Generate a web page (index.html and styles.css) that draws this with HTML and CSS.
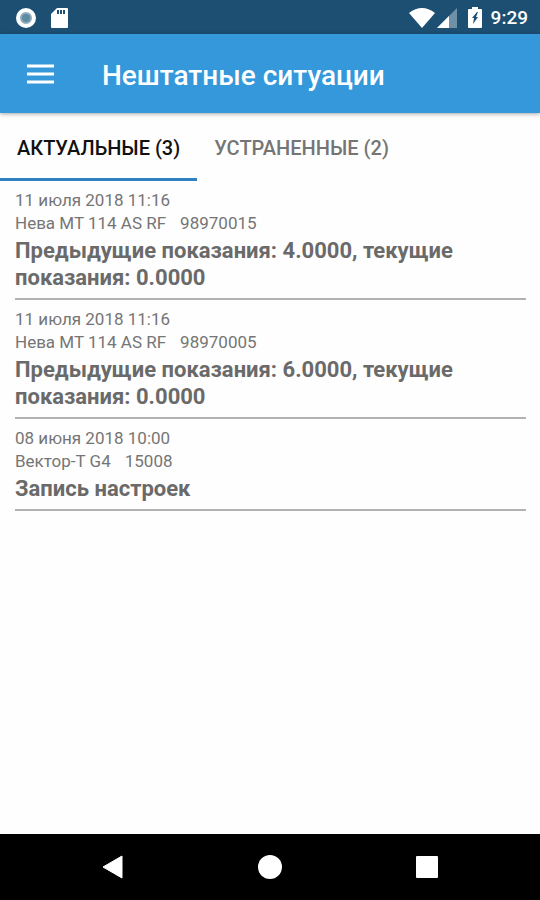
FILE: index.html
```html
<!DOCTYPE html>
<html lang="ru">
    <head>
        <meta charset="UTF-8">
        <meta name="viewport" content="width=device-width, initial-scale=1.0">
        <title>Нештатные ситуации</title>
        <link rel="stylesheet" href="styles.css">
    </head>
    <body>
        <div class="status-bar">
            <svg class="status-icon" width="22" height="22" viewBox="0 0 22 22">
                <circle cx="11" cy="11" r="8" fill="#8facbc" stroke="#fff" stroke-width="4"/>
                <circle cx="11" cy="11" r="4" fill="#5f8ba3"/>
            </svg>
            <svg class="status-icon" width="17" height="22" viewBox="0 0 17 22">
                <path d="M6 1h10q1 0 1 1v18q0 1-1 1H1q-1 0-1-1V7z" fill="#fff"/>
                <path d="M6 3h2v4H6zM9 3h2v4H9zM12 3h2v4h-2z" fill="#1c4f72"/>
            </svg>
            <span class="spacer"></span>
            <svg width="26" height="22" viewBox="0 0 26 22">
                <path d="M0 6Q13-4 26 6L13 21z" fill="#fff"/>
            </svg>
            <svg class="signal" width="20" height="22" viewBox="0 0 20 22">
                <path d="M20 1v20H0z" fill="#6f91a8"/>
                <path d="M12 9v12H0z" fill="#fff"/>
            </svg>
            <svg class="battery" width="14" height="22" viewBox="0 0 14 22">
                <path d="M4 0h6v2h3q1 0 1 1v17q0 1-1 1H1q-1 0-1-1V3q0-1 1-1h3z" fill="#fff"/>
                <path d="M9 5L4 11h2L5 17l5-7H8l2-5z" fill="#1c4f72"/>
            </svg>
            <span class="clock">9:29</span>
        </div>

        <header class="app-bar">
            <button class="menu-button" aria-label="Меню">
                <svg width="27" height="20" viewBox="0 0 27 20">
                    <path d="M0 2h27M0 10h27M0 18h27" stroke="#fff" stroke-width="3"/>
                </svg>
            </button>
            <h1>Нештатные ситуации</h1>
        </header>

        <div class="tabs" role="tablist">
            <button class="tab selected" role="tab" aria-selected="true">АКТУАЛЬНЫЕ (3)</button>
            <button class="tab" role="tab" aria-selected="false">УСТРАНЕННЫЕ (2)</button>
        </div>

        <main class="events">
            <article class="event">
                <p class="meta">11 июля 2018 11:16</p>
                <p class="meta"><span>Нева МТ 114 AS RF</span><span>98970015</span></p>
                <h2>Предыдущие показания: 4.0000, текущие показания: 0.0000</h2>
            </article>
            <article class="event">
                <p class="meta">11 июля 2018 11:16</p>
                <p class="meta"><span>Нева МТ 114 AS RF</span><span>98970005</span></p>
                <h2>Предыдущие показания: 6.0000, текущие показания: 0.0000</h2>
            </article>
            <article class="event">
                <p class="meta">08 июня 2018 10:00</p>
                <p class="meta"><span>Вектор-Т G4</span><span>15008</span></p>
                <h2>Запись настроек</h2>
            </article>
        </main>

        <nav class="nav-bar">
            <button aria-label="Назад">
                <svg width="24" height="24" viewBox="0 0 24 24">
                    <path d="M21 1v22L2 12z" fill="#fff" stroke="#fff" stroke-linejoin="round"/>
                </svg>
            </button>
            <button aria-label="Домой">
                <svg width="24" height="24" viewBox="0 0 24 24">
                    <circle cx="12" cy="12" r="12" fill="#fff"/>
                </svg>
            </button>
            <button aria-label="Недавние">
                <svg width="24" height="24" viewBox="0 0 24 24">
                    <rect x="1" y="1" width="22" height="22" rx="1" fill="#fff"/>
                </svg>
            </button>
        </nav>
    </body>
</html>
```
FILE: styles.css
```css
* {
    box-sizing: border-box;
}

body {
    margin: 0;
    min-height: 100vh;
    display: flex;
    flex-direction: column;
    font-family: Roboto, "Noto Sans", sans-serif;
    background-color: #fefefe;
    color: #6a6a6a;
}

h1, h2, p {
    margin: 0;
}

button {
    border: none;
    background: none;
    padding: 0;
    font-family: inherit;
    cursor: pointer;
}

svg {
    display: block;
}

.status-bar {
    display: flex;
    align-items: center;
    height: 34px;
    padding: 1px 12px 0 15px;
    background-color: #1c4f72;
    color: #fff;
}

.status-icon {
    margin-right: 14px;
}

.spacer {
    flex: 1;
}

.signal {
    margin-left: 2px;
}

.battery {
    margin: 0 9px 0 11px;
}

.clock {
    font-size: 19px;
    font-weight: 500;
}

.app-bar {
    display: flex;
    align-items: center;
    gap: 48px;
    height: 79px;
    padding: 0 27px;
    background-color: #3498db;
    box-shadow: 0 1px 4px rgba(0, 0, 0, 0.35);
    color: #fff;
}

.app-bar h1 {
    padding-top: 3px;
    font-size: 28px;
    font-weight: 500;
}

.tabs {
    display: flex;
    height: 68px;
}

.tab {
    padding: 5px 17px 0;
    border-bottom: 3px solid transparent;
    font-size: 20px;
    font-weight: 500;
    color: #757575;
}

.tab.selected {
    border-bottom-color: #2f80c3;
    color: #111;
}

.events {
    flex: 1;
    padding: 0 14px 0 15px;
}

.event {
    padding: 8px 0 7px;
    border-bottom: 2px solid #b2b2b2;
}

.meta {
    display: flex;
    gap: 14px;
    font-size: 17px;
    line-height: 23px;
    color: #757575;
}

.event h2 {
    margin-top: 2px;
    font-size: 22px;
    line-height: 27px;
    font-weight: 700;
}

.nav-bar {
    display: flex;
    justify-content: space-around;
    align-items: center;
    height: 66px;
    padding: 0 34px;
    background-color: #000;
}
```
